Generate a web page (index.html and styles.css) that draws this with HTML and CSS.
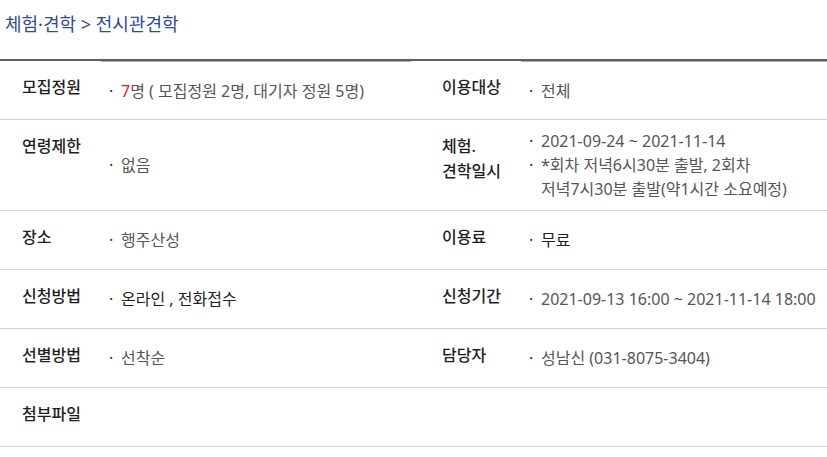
FILE: index.html
```html
<!DOCTYPE html>
<html lang="ko">
<head>
<meta charset="utf-8">
<title>전시관견학</title>
<link rel="stylesheet" href="styles.css">
</head>
<body>
<div class="page">
  <h2 class="crumb">체험·견학 &gt; 전시관견학</h2>
  <div class="info">
    <div class="row first">
      <div class="th">모집정원</div>
      <div class="td"><p class="item"><span><em class="red">7</em>명 ( 모집정원 2명, 대기자 정원 5명)</span></p></div>
      <div class="th th-r">이용대상</div>
      <div class="td"><p class="item"><span>전체</span></p></div>
    </div>
    <div class="row">
      <div class="th">연령제한</div>
      <div class="td"><p class="item"><span>없음</span></p></div>
      <div class="th th-r">체험.<br>견학일시</div>
      <div class="td">
        <p class="item"><span>2021-09-24 ~ 2021-11-14</span></p>
        <p class="item"><span>*회차 저녁6시30분 출발, 2회차<br>저녁7시30분 출발(약1시간 소요예정)</span></p>
      </div>
    </div>
    <div class="row">
      <div class="th">장소</div>
      <div class="td"><p class="item"><span>행주산성</span></p></div>
      <div class="th th-r">이용료</div>
      <div class="td"><p class="item dark"><span>무료</span></p></div>
    </div>
    <div class="row">
      <div class="th">신청방법</div>
      <div class="td"><p class="item dark"><span>온라인 , 전화접수</span></p></div>
      <div class="th th-r">신청기간</div>
      <div class="td"><p class="item"><span>2021-09-13 16:00 ~ 2021-11-14 18:00</span></p></div>
    </div>
    <div class="row">
      <div class="th">선별방법</div>
      <div class="td"><p class="item"><span>선착순</span></p></div>
      <div class="th th-r">담당자</div>
      <div class="td"><p class="item"><span>성남신 (031-8075-3404)</span></p></div>
    </div>
    <div class="row">
      <div class="th">첨부파일</div>
      <div class="td wide"></div>
    </div>
  </div>
</div>
</body>
</html>
```
FILE: styles.css
```css
html, body {
  margin: 0;
  padding: 0;
  background: #fff;
}
body {
  font-family: "Noto Sans", "Noto Sans CJK KR", sans-serif;
  font-size: 16px;
  color: #222;
}
.page {
  width: 827px;
}
.crumb {
  margin: 0;
  padding: 11px 0 0 5px;
  height: 59px;
  box-sizing: border-box;
  font-size: 18px;
  font-weight: 400;
  line-height: 26px;
  color: #2f4a9a;
}
.info {
  border-top: 2px solid #5b5e66;
}
.row {
  display: grid;
  grid-template-columns: 101px 310px 110px 306px;
  border-bottom: 1px solid #d2d2d2;
  min-height: 58px;
}
.th {
  padding: 14px 0 0 22px;
  line-height: 25px;
  font-weight: 500;
  color: #1e1e1e;
}
.th-r {
  padding-left: 31px;
}
.td {
  display: flex;
  flex-direction: column;
  justify-content: center;
  padding: 9px 0 9px 8px;
  color: #555;
}
.wide {
  grid-column: 2 / 5;
}
.row.first .td {
  border-top: 1px solid #abaeb8;
}
.item {
  margin: 0;
  display: flex;
  line-height: 24px;
}
.item::before {
  content: "·";
  flex: none;
  width: 12px;
  color: #333;
}
.item.dark {
  color: #222;
}
.red {
  font-style: normal;
  color: #e0202a;
}
```
